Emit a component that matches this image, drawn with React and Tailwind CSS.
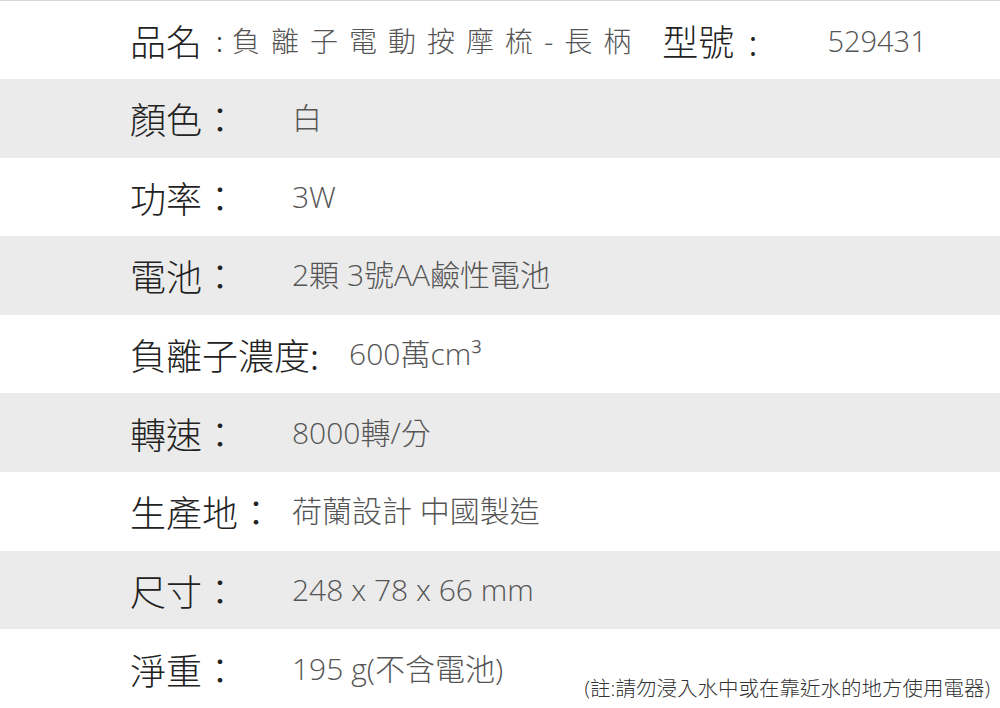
import React from "react";

const rows = [
  { label: "顏色：", value: "白" },
  { label: "功率：", value: "3W" },
  { label: "電池：", value: "2顆 3號AA鹼性電池" },
  { label: "負離子濃度:", value: "600萬cm³", gap: "ml-[30px]" },
  { label: "轉速：", value: "8000轉/分" },
  { label: "生產地：", value: "荷蘭設計 中國製造" },
  { label: "尺寸：", value: "248 x 78 x 66 mm" },
];

const cjk = "font-['Noto_Sans_CJK_TC','Noto_Sans',sans-serif]";
const num = "font-['Open_Sans','Noto_Sans_CJK_TC',sans-serif]";

function Row({ label, value, gray, gap }) {
  return (
    <div className={`flex items-center h-[78.6px] pl-[130px] ${gray ? "bg-[#ebebeb]" : "bg-white"}`}>
      <span className={`${cjk} font-light text-[36px] leading-none text-[#222] min-w-[162px]`}>
        {label}
      </span>
      <span className={`${num} font-light text-[30px] leading-none text-[#555] ${gap || ""}`}>
        {value}
      </span>
    </div>
  );
}

export default function App() {
  return (
    <div className="w-[1000px] h-[708px] bg-white overflow-hidden border-t border-[#d8d8d8]">
      <div className="flex items-center h-[78px] pl-[130px]">
        <span className={`${cjk} font-light text-[36px] leading-none text-[#222]`}>品名</span>
        <span className={`${cjk} font-light text-[28px] leading-none text-[#333] ml-[14px] mr-[9px]`}>:</span>
        <span className={`${cjk} font-light text-[28px] leading-none text-[#555] tracking-[11px]`}>
          負離子電動按摩梳-長柄
        </span>
        <span className={`${cjk} font-light text-[36px] leading-none text-[#222] ml-[20px]`}>型號</span>
        <span className={`${cjk} font-light text-[36px] leading-none text-[#222] ml-[14px]`}>:</span>
        <span className={`${num} font-light text-[29px] leading-none text-[#555] ml-[70px]`}>529431</span>
      </div>
      {rows.map((r, i) => (
        <Row key={r.label} {...r} gray={i % 2 === 0} />
      ))}
      <div className="flex h-[80px] pl-[130px] bg-white">
        <div className="flex items-center">
          <span className={`${cjk} font-light text-[36px] leading-none text-[#222] min-w-[162px]`}>淨重：</span>
          <span className={`${num} font-light text-[30px] leading-none text-[#555]`}>195 g(不含電池)</span>
        </div>
        <div className={`${num} font-light ml-auto self-end mb-[5px] mr-[10px] text-[20.5px] text-[#333]`}>
          (註:請勿浸入水中或在靠近水的地方使用電器)
        </div>
      </div>
    </div>
  );
}
